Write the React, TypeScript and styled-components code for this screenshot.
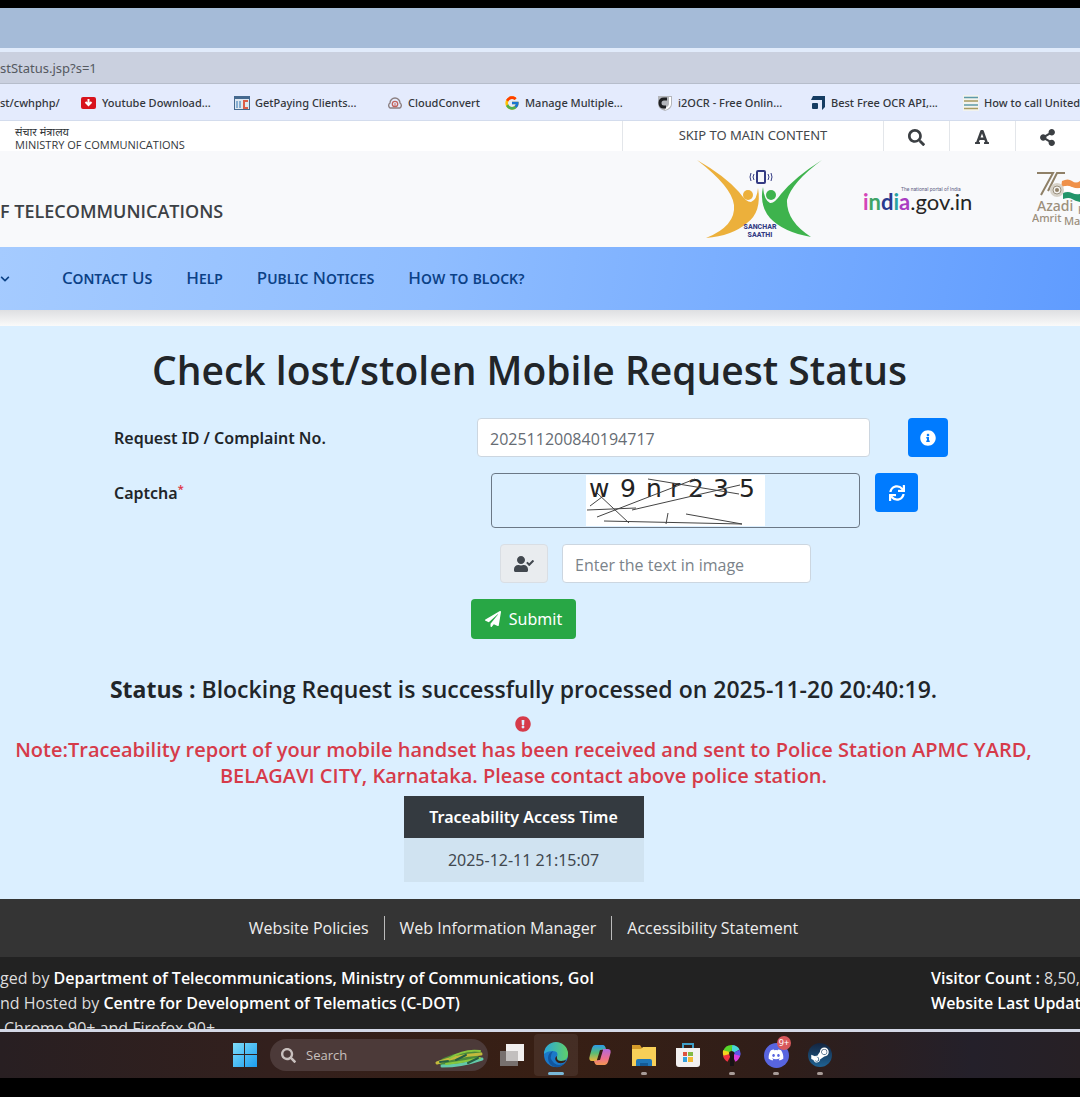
import React from "react";
import styled, { createGlobalStyle } from "styled-components";
import {
  FaSearch,
  FaFont,
  FaShareAlt,
  FaInfoCircle,
  FaSync,
  FaUserCheck,
  FaPaperPlane,
  FaExclamationCircle,
  FaChevronDown,
  FaDiscord,
  FaSteamSymbol,
} from "react-icons/fa";
import { FcGoogle } from "react-icons/fc";

const uiFont = `"Noto Sans", "Open Sans", sans-serif`;
const pageFont = `"Noto Sans", "Open Sans", sans-serif`;
const headingFont = `"Open Sans", "Noto Sans", sans-serif`;

const GlobalStyle = createGlobalStyle`
  *, *::before, *::after { box-sizing: border-box; }
  body { margin: 0; background: #000; overflow-x: hidden; }
  button, input { font: inherit; }
  h1, h2, p { margin: 0; }
`;

const Screen = styled.div`
  display: flex;
  flex-direction: column;
  padding: 8px 0 19px;
  background: #000;
  color: #212529;
  font-family: ${pageFont};
  overflow: hidden;
`;

/* Browser chrome */
const TabStrip = styled.div`
  height: 40px;
  background: #a5bbd8;
`;
const AddressBar = styled.div`
  height: 36px;
  display: flex;
  align-items: center;
  background: #cad0df;
  border-top: 4px solid #e1ebfb;
  border-bottom: 1px solid #b6bdcb;
  font: 13px/20px ${uiFont};
  color: #55595f;
`;
const Bookmarks = styled.nav`
  height: 37px;
  padding-top: 2px;
  display: flex;
  align-items: center;
  background: #e4ebfd;
  border-bottom: 1px solid #d3dced;
  font: 500 11px/20px ${uiFont};
`;
const Bookmark = styled.a<{ $width: number }>`
  flex: 0 0 ${(p) => p.$width}px;
  display: flex;
  align-items: center;
  gap: 5px;
  color: #33363b;
  text-decoration: none;
  white-space: nowrap;
  svg { flex: none; }
`;

/* Ministry header */
const TopBar = styled.div`
  height: 30px;
  display: flex;
  justify-content: space-between;
  background: #fff;
`;
const Ministry = styled.div`
  padding: 4px 0 0 15px;
  font: 11px/13px ${headingFont};
  color: #33373b;
  p { white-space: nowrap; }
`;
const TopTools = styled.div`
  display: flex;
`;
const ToolCell = styled.button<{ $width: number }>`
  width: ${(p) => p.$width}px;
  padding: 2px 1px 0 0;
  display: grid;
  place-items: center;
  border: 0;
  border-left: 1px solid #e3e6ea;
  background: none;
  color: #3b3f43;
`;
const SkipLink = styled.a`
  width: 261px;
  padding-top: 4px;
  border-left: 1px solid #e3e6ea;
  font: 13px/20px ${pageFont};
  color: #44484c;
  text-align: center;
  text-decoration: none;
`;
const Masthead = styled.header`
  height: 96px;
  display: flex;
  justify-content: space-between;
  align-items: center;
  background: #f8f9fb;
`;
const Department = styled.p`
  padding-top: 24px;
  font-family: ${headingFont};
  font-size: 18px;
  line-height: 24px;
  font-weight: 600;
  color: #3c4145;
  white-space: nowrap;
`;
const Logos = styled.div`
  display: flex;
  align-items: center;
  svg { display: block; }
`;
const IndiaLogo = styled.div`
  width: 209px;
  padding-left: 40px;
`;

/* Navigation */
const Nav = styled.nav`
  height: 63px;
  padding-bottom: 1px;
  display: flex;
  align-items: center;
  gap: 34px;
  background: linear-gradient(100deg, #a5cbff 0%, #8fbdff 40%, #609cff 100%);
  a {
    color: #0b4186;
    font: 500 17px/24px ${pageFont};
    font-variant: small-caps;
    text-decoration: none;
    white-space: nowrap;
  }
`;
const NavCaret = styled.button`
  width: 28px;
  padding: 0;
  border: 0;
  background: none;
  color: #0b4186;
  text-align: left;
`;
const NavShadow = styled.div`
  height: 16px;
  background: linear-gradient(#dedfe2, #fafafa);
`;

/* Status form */
const Main = styled.main`
  padding: 16px 33px 17px 0;
  display: flex;
  flex-direction: column;
  align-items: center;
  background: #dbefff;
`;
const Title = styled.h1`
  padding-left: 12px;
  font-family: ${headingFont};
  font-size: 39px;
  line-height: 56px;
  font-weight: 600;
  text-align: center;
`;
const Form = styled.form`
  width: 100%;
  padding: 20px 0 0 114px;
  display: flex;
  flex-direction: column;
  gap: 16px;
`;
const Row = styled.div`
  display: grid;
  grid-template-columns: 363px 1fr;
  align-items: start;
`;
const Label = styled.label`
  padding-top: 8px;
  font-size: 16px;
  line-height: 24px;
  font-weight: 600;
  sup { color: #e03444; font-size: 11px; line-height: 0; }
`;
const Field = styled.div<{ $inset: number; $gap: number }>`
  display: flex;
  align-items: flex-start;
  padding-left: ${(p) => p.$inset}px;
  gap: ${(p) => p.$gap}px;
`;
const TextInput = styled.input<{ $width: number }>`
  width: ${(p) => p.$width}px;
  height: 39px;
  padding: 2px 12px 0;
  border: 1px solid #ccd6e0;
  border-radius: 4px;
  background: #fff;
  color: #666c73;
  font-family: ${headingFont};
  font-size: 16px;
  &::placeholder { color: #7b838a; opacity: 1; }
`;
const BlueButton = styled.button<{ $width: number }>`
  width: ${(p) => p.$width}px;
  height: 39px;
  padding: 0;
  display: grid;
  place-items: center;
  border: 0;
  border-radius: 4px;
  background: #007bff;
  color: #fff;
`;
const Captcha = styled.div`
  width: 369px;
  height: 55px;
  display: flex;
  justify-content: center;
  align-items: center;
  border: 1px solid #6b7886;
  border-radius: 4px;
`;
const Addon = styled.span`
  width: 48px;
  height: 39px;
  display: grid;
  place-items: center;
  border: 1px solid #d9dee4;
  border-radius: 4px;
  background: #e9ecef;
  color: #42484f;
`;
const Submit = styled.button`
  margin-left: 357px;
  width: 105px;
  height: 40px;
  padding: 0;
  display: flex;
  align-items: center;
  justify-content: center;
  gap: 8px;
  border: 0;
  border-radius: 4px;
  background: #28a745;
  color: #fff;
  font-size: 16px;
`;
const Status = styled.h2`
  padding-top: 35px;
  font-family: ${headingFont};
  font-size: 23px;
  line-height: 30px;
  font-weight: 600;
  text-align: center;
  b { font-weight: 700; }
`;
const Alert = styled.div`
  display: flex;
  flex-direction: column;
  align-items: center;
  gap: 5px;
  padding: 12px 0 7px;
  color: #d63b4a;
  p {
    font-family: ${headingFont};
    font-size: 20px;
    line-height: 26px;
    font-weight: 600;
    text-align: center;
  }
`;
const TimeTable = styled.table`
  width: 240px;
  border-collapse: collapse;
  font-size: 16px;
  line-height: 24px;
  text-align: center;
  th {
    height: 42px;
    padding: 0;
    background: #343a40;
    color: #fff;
    font-weight: 600;
  }
  td {
    height: 44px;
    padding: 0;
    background: #d0e3f1;
    color: #41484f;
  }
`;

/* Footer */
const FooterLinks = styled.div`
  height: 58px;
  padding-right: 33px;
  display: flex;
  justify-content: center;
  align-items: center;
  background: #343434;
  a {
    padding: 0 15px;
    color: #eee;
    font-family: ${headingFont};
    font-size: 16px;
    line-height: 24px;
    text-decoration: none;
  }
  a + a { border-left: 1px solid #bbb; }
`;
const FooterInfo = styled.footer`
  height: 72px;
  padding-top: 9px;
  display: flex;
  justify-content: space-between;
  overflow: hidden;
  background: #222;
  color: #ddd;
  font-family: ${headingFont};
  font-size: 16px;
  line-height: 25px;
  white-space: nowrap;
  b { color: #fff; font-weight: 600; }
`;
const Browsers = styled.p`
  padding-left: 4px;
`;
const Visitors = styled.div`
  width: 149px;
`;

/* Taskbar */
const Taskbar = styled.div`
  height: 49px;
  padding: 0 15px 0 0;
  display: flex;
  align-items: center;
  justify-content: center;
  border-top: 3px solid #d4d8e6;
  background: linear-gradient(90deg, #281f22 0%, #33201d 25%, #381f14 50%, #301e19 72%, #24202a 90%, #272025 100%);
`;
const Slot = styled.button<{ $active?: boolean; $running?: boolean }>`
  position: relative;
  width: 44px;
  height: 42px;
  padding: 0;
  display: grid;
  place-items: center;
  border: 0;
  border-radius: 4px;
  background: ${(p) => (p.$active ? "#ffffff12" : "none")};
  svg { display: block; }
  &::after {
    content: "";
    position: absolute;
    bottom: 1px;
    left: calc(50% - ${(p) => (p.$active ? 8 : 3)}px);
    width: ${(p) => (p.$active ? 16 : 6)}px;
    height: 3px;
    border-radius: 2px;
    background: ${(p) => (p.$active ? "#79b8d8" : p.$running ? "#a89c98" : "transparent")};
  }
`;
const SearchBox = styled.label`
  width: 218px;
  height: 32px;
  margin: 0 2px 0 3px;
  padding: 0 2px 0 11px;
  display: flex;
  align-items: center;
  border-radius: 16px;
  background: #4c3a39;
  color: #c8c0be;
  overflow: hidden;
  svg { flex: none; }
  input {
    flex: 1;
    min-width: 0;
    padding: 0 0 0 10px;
    border: 0;
    background: none;
    color: #c8c0be;
    font: 13px/20px ${headingFont};
    &::placeholder { color: #c8c0be; opacity: 1; }
  }
`;
const Badge = styled.span`
  position: absolute;
  top: 2px;
  right: 7px;
  width: 14px;
  height: 14px;
  border-radius: 7px;
  background: #d8585c;
  color: #fff;
  font: 9px/14px ${uiFont};
  text-align: center;
`;

const DownloadIcon = () => (
  <svg width="16" height="16" viewBox="0 0 16 16">
    <rect x="0" y="2" width="15" height="12" rx="2" fill="#d8131d" />
    <path d="M7.5 4v5M4.5 7l3 3 3-3" stroke="#fff" strokeWidth="2" fill="none" />
  </svg>
);
const ClientsIcon = () => (
  <svg width="16" height="16" viewBox="0 0 16 16">
    <rect x="0.5" y="1.5" width="15" height="13" fill="#dfe7f0" stroke="#45698f" />
    <path d="M0 2h16v2H0z" fill="#45698f" />
    <path d="M3 6v7M6 6v7" stroke="#6a9cc8" strokeWidth="1.5" />
    <path d="M14 6h-4v7h4" stroke="#dc5c48" strokeWidth="2" fill="none" />
  </svg>
);
const CloudIcon = () => (
  <svg width="16" height="16" viewBox="0 0 16 16" fill="none">
    <path d="M3 13a3 3 0 0 1 0-5 5 5 0 0 1 10 0 3 3 0 0 1 0 5z" stroke="#8b7f81" strokeWidth="1.4" />
    <circle cx="8" cy="9" r="2.7" stroke="#c2635c" strokeWidth="1.3" />
    <path d="M8 11V8" stroke="#c2635c" />
  </svg>
);
const OcrIcon = () => (
  <svg width="16" height="16" viewBox="0 0 16 16">
    <path d="M1 1h14v8q0 5-7 7-7-2-7-7z" fill="#b4b6bb" />
    <path d="M13 2v7q0 3-5 5" stroke="#fff" strokeWidth="2" fill="none" />
    <path d="M10 4H7Q3 4 3 8t4 4h2" stroke="#1f2023" strokeWidth="3" fill="none" />
  </svg>
);
const ApiIcon = () => (
  <svg width="16" height="16" viewBox="0 0 16 16" fill="#153c62">
    <path d="M3 1h12v11l-3 3V5H1z" />
    <rect x="2" y="8" width="6" height="6" rx="1" />
  </svg>
);
const LinesIcon = () => (
  <svg width="16" height="16" viewBox="0 0 16 16">
    <rect width="16" height="16" fill="#f2f3ee" />
    <path d="M1 2.5h14M1 10h14" stroke="#5d9aa9" strokeWidth="1.5" />
    <path d="M1 6h14M1 13.5h14" stroke="#a89b61" strokeWidth="1.5" />
  </svg>
);

const SancharSaathi = () => (
  <svg width="126" height="82" viewBox="0 0 126 82">
    <path d="M0 2Q28 18 42 34Q49 44 54 44Q60 42 61 30Q65 54 50 65Q35 78 9 80Q39 68 37 47Q35 29 0 2z" fill="#ecb03b" />
    <path d="M125 2Q98 19 84 36Q77 46 73 45Q67 42 66 29Q62 47 73 60Q86 74 114 79Q89 63 90 42Q95 24 125 2z" fill="#3eb34d" />
    <circle cx="51" cy="37" r="5" fill="#ecb03b" />
    <circle cx="74" cy="37" r="5" fill="#3eb34d" />
    <rect x="60" y="13" width="8" height="12" rx="1" fill="none" stroke="#343b83" strokeWidth="2" />
    <path d="M57 16q-2 3 0 6M54 15q-2 4 0 8M71 16q2 3 0 6M74 15q2 4 0 8" fill="none" stroke="#343b83" />
    <g fill="#343b83" fontFamily="Roboto, sans-serif" fontWeight="800" fontSize="7" textAnchor="middle">
      <text x="63" y="71">SANCHAR</text>
      <text x="63" y="79">SAATHI</text>
    </g>
  </svg>
);
const IndiaGov = () => (
  <svg width="120" height="36" viewBox="0 0 120 36">
    <text x="38" y="10" fontFamily="Roboto, sans-serif" fontSize="5" fill="#626486">The national portal of India</text>
    <text x="0" y="29" fontFamily="Lato, sans-serif" fontSize="22" fontWeight="700">
      <tspan fill="#d445b8">i</tspan>
      <tspan fill="#3fa468">n</tspan>
      <tspan fill="#293a8e">d</tspan>
      <tspan fill="#27a3a0">i</tspan>
      <tspan fill="#a93cc2">a</tspan>
      <tspan fill="#252525" fontWeight="400">.gov.in</tspan>
    </text>
  </svg>
);
const Azadi = () => (
  <svg width="48" height="60" viewBox="0 0 48 60">
    <path d="M5 4h16L9 26M33 4h-8l-9 18" fill="none" stroke="#8f8067" strokeWidth="2" />
    <path d="M30 12q6-3 10 0t8 0v7q-5 2-9-1t-10 1z" fill="#ef914a" />
    <path d="M30 18q5-2 10 0t8 1v5q-5 2-9-1t-9 1z" fill="#fff" />
    <path d="M31 24q5-2 9 0t8 1v8q-5-1-8-3t-9 0z" fill="#22956a" />
    <circle cx="25" cy="21" r="7" fill="#d7d2c8" />
    <circle cx="25" cy="21" r="4" fill="#f4f2ee" stroke="#9a9180" />
    <circle cx="25" cy="21" r="2" fill="#8f8067" />
    <g fontFamily="Noto Sans, sans-serif" fill="#9c8f7c" fontWeight="500">
      <text x="5" y="42" fontSize="14">Azadi</text>
      <text x="46" y="45" fontSize="10">K</text>
      <text x="0" y="53" fontSize="11">Amrit</text>
      <text x="32" y="56" fontSize="11">Ma</text>
    </g>
  </svg>
);

const CaptchaImage = () => (
  <svg width="179" height="51" viewBox="0 0 179 51" role="img" aria-label="Captcha image">
    <rect width="179" height="51" fill="#fff" />
    <text x="3 34 60 84 102 127 153" y="22" fontFamily="DejaVu Sans, sans-serif" fontSize="25" fill="#222">
      w9nr235
    </text>
    <path
      d="M11 18L43 48M4 31L16 22M1 35L50 33M11 42L109 4M62 4L153 19M46 35L154 10M18 46L156 49M80 49L82 38M100 39L156 49"
      stroke="#444"
      fill="none"
    />
  </svg>
);

const WindowsIcon = () => (
  <svg width="24" height="24" viewBox="0 0 24 24">
    <defs>
      <linearGradient id="win" x1="0" y1="0" x2="1" y2="1">
        <stop offset="0" stopColor="#7fdcf8" />
        <stop offset="1" stopColor="#1b9df0" />
      </linearGradient>
    </defs>
    <path d="M0 0h11v11H0zM12 0h12v11H12zM0 12h11v12H0zM12 12h12v12H12z" fill="url(#win)" />
  </svg>
);
const SearchArt = () => (
  <svg width="52" height="30" viewBox="0 0 52 30" fill="none" strokeLinecap="round">
    <path d="M3 22Q20 10 48 12Q40 26 8 26z" fill="#4c8a3a" />
    <path d="M3 23Q20 16 47 14" stroke="#c3b93c" strokeWidth="3" />
    <path d="M8 26Q28 26 48 19" stroke="#63c8aa" strokeWidth="3" />
    <path d="M16 18Q30 9 46 11M12 24q18-2 34-6" stroke="#87c73f" strokeWidth="2" />
    <path d="M22 20l10-5M34 23l10-5M6 22l8-1" stroke="#265f43" strokeWidth="2" />
  </svg>
);
const TaskViewIcon = () => (
  <svg width="26" height="24" viewBox="0 0 26 24">
    <rect x="1" y="8" width="18" height="15" fill="#77706e" />
    <rect x="7" y="1" width="18" height="17" fill="#f1efee" />
    <rect x="7" y="8" width="12" height="10" fill="#c2bfbe" />
  </svg>
);
const EdgeIcon = () => (
  <svg width="26" height="26" viewBox="0 0 26 26">
    <defs>
      <linearGradient id="edgeTop" x1="0" y1="0" x2="1" y2="0">
        <stop offset="0" stopColor="#2aa6dc" />
        <stop offset="1" stopColor="#5fd06a" />
      </linearGradient>
    </defs>
    <circle cx="13" cy="13" r="12" fill="#1b78c8" />
    <path d="M1 12A12 12 0 0 1 25 12q0 7-7 7-5 0-4-4 2-6-4-6-6 0-9 3z" fill="url(#edgeTop)" />
    <path d="M10 9q-5 7 1 12 5 4 11 0-4 5-10 4Q5 23 5 16q0-5 5-7z" fill="#12569f" />
    <path d="M14 14q-1 5 4 5 3 0 5-1l-1 2q-6 3-9-1-2-3 1-5z" fill="#381f14" />
  </svg>
);
const CopilotIcon = () => (
  <svg width="24" height="24" viewBox="0 0 24 24">
    <defs>
      <linearGradient id="copL" x1="0" y1="0" x2="0" y2="1">
        <stop offset="0" stopColor="#2c9be8" />
        <stop offset="0.5" stopColor="#58bd75" />
        <stop offset="1" stopColor="#f1b43a" />
      </linearGradient>
      <linearGradient id="copR" x1="0" y1="0" x2="0" y2="1">
        <stop offset="0" stopColor="#b368dd" />
        <stop offset="0.6" stopColor="#ee6f8d" />
        <stop offset="1" stopColor="#f29850" />
      </linearGradient>
    </defs>
    <path d="M7 2h8q2 0 3 4l-5 1-4 11H4Q0 18 2 12L4 5q1-3 3-3z" fill="url(#copL)" />
    <path d="M17 22H9q-2 0-3-4l5-1 4-11h5q4 0 2 6l-2 7q-1 3-3 3z" fill="url(#copR)" />
    <path d="M12 7h3l-3 10H9z" fill="#381f14" />
  </svg>
);
const FolderIcon = () => (
  <svg width="26" height="24" viewBox="0 0 26 24">
    <path d="M1 2h8l2 3h14v6H1z" fill="#d59a29" />
    <path d="M1 6h9l2-2h13v19H1z" fill="#f7cf58" />
    <path d="M5 23v-5q0-2 2-2h12q2 0 2 2v5z" fill="#1e76b8" />
    <path d="M9 23v-3h8v3z" fill="#145a94" />
  </svg>
);
const StoreIcon = () => (
  <svg width="26" height="26" viewBox="0 0 26 26">
    <path d="M8 7V2h10v5" fill="none" stroke="#3f9fc8" strokeWidth="2" />
    <path d="M1 6h24v16q0 3-3 3H4q-3 0-3-3z" fill="#f3f1f1" />
    <path d="M8 10h4v4H8z" fill="#dd5340" />
    <path d="M13 10h5v4h-5z" fill="#83b943" />
    <path d="M8 15h4v5H8z" fill="#35a0dd" />
    <path d="M13 15h5v5h-5z" fill="#f3b936" />
  </svg>
);
const ColorWheelIcon = () => (
  <svg width="22" height="26" viewBox="0 0 22 26" fill="none" strokeWidth="6">
    <path d="M11 6a6 6 0 0 1 5 3" stroke="#48d7d7" />
    <path d="M5 10a6 6 0 0 1 6-4" stroke="#57d62b" />
    <path d="M6 14a6 6 0 0 1-1-5" stroke="#f3d51e" />
    <path d="M8 17a6 6 0 0 1-3-4" stroke="#ee3240" />
    <path d="M16 9a6 6 0 0 1 0 5" stroke="#5d56e8" />
    <path d="M16 13a6 6 0 0 1-3 4" stroke="#db3edc" />
    <path d="M11 12v12" stroke="#181315" strokeWidth="4" />
    <circle cx="11" cy="12" r="2" fill="#211614" stroke="none" />
  </svg>
);
const DiscordDisc = styled.span`
  width: 25px;
  height: 25px;
  display: grid;
  place-items: center;
  border-radius: 50%;
  background: #5865e0;
  color: #fff;
`;
const SteamDisc = styled(DiscordDisc)`
  width: 24px;
  height: 24px;
  background: linear-gradient(#14243f, #1f6394);
`;

const bookmarks = [
  { text: "Youtube Download...", icon: <DownloadIcon />, width: 153 },
  { text: "GetPaying Clients...", icon: <ClientsIcon />, width: 153 },
  { text: "CloudConvert", icon: <CloudIcon />, width: 117 },
  { text: "Manage Multiple...", icon: <FcGoogle size={16} />, width: 153 },
  { text: "i2OCR - Free Onlin...", icon: <OcrIcon />, width: 153 },
  { text: "Best Free OCR API,...", icon: <ApiIcon />, width: 153 },
  { text: "How to call United", icon: <LinesIcon />, width: 153 },
];

export default function App() {
  return (
    <Screen>
      <GlobalStyle />
      <TabStrip />
      <AddressBar>stStatus.jsp?s=1</AddressBar>
      <Bookmarks aria-label="Bookmarks">
        <Bookmark href="#" $width={81}>st/cwhphp/</Bookmark>
        {bookmarks.map((b) => (
          <Bookmark href="#" key={b.text} $width={b.width}>
            {b.icon}
            {b.text}
          </Bookmark>
        ))}
      </Bookmarks>

      <TopBar>
        <Ministry>
          <p lang="hi">संचार मंत्रालय</p>
          <p>MINISTRY OF COMMUNICATIONS</p>
        </Ministry>
        <TopTools>
          <SkipLink href="#content">SKIP TO MAIN CONTENT</SkipLink>
          <ToolCell $width={66} aria-label="Search"><FaSearch size={17} /></ToolCell>
          <ToolCell $width={66} aria-label="Text size"><FaFont size={16} /></ToolCell>
          <ToolCell $width={65} aria-label="Share"><FaShareAlt size={17} /></ToolCell>
        </TopTools>
      </TopBar>

      <Masthead>
        <Department>F TELECOMMUNICATIONS</Department>
        <Logos>
          <SancharSaathi />
          <IndiaLogo><IndiaGov /></IndiaLogo>
          <Azadi />
        </Logos>
      </Masthead>

      <Nav>
        <NavCaret aria-label="Open submenu"><FaChevronDown size={10} /></NavCaret>
        <a href="#">Contact Us</a>
        <a href="#">Help</a>
        <a href="#">Public Notices</a>
        <a href="#">How to block?</a>
      </Nav>
      <NavShadow />

      <Main id="content">
        <Title>Check lost/stolen Mobile Request Status</Title>
        <Form onSubmit={(e: React.FormEvent) => e.preventDefault()}>
          <Row>
            <Label htmlFor="request">Request ID / Complaint No.</Label>
            <Field $inset={0} $gap={38}>
              <TextInput id="request" $width={393} defaultValue="202511200840194717" />
              <BlueButton type="button" $width={40} aria-label="Information"><FaInfoCircle size={16} /></BlueButton>
            </Field>
          </Row>
          <Row>
            <Label htmlFor="captcha">Captcha<sup>*</sup></Label>
            <Field $inset={14} $gap={15}>
              <Captcha><CaptchaImage /></Captcha>
              <BlueButton type="button" $width={43} aria-label="Refresh captcha"><FaSync size={16} /></BlueButton>
            </Field>
          </Row>
          <Row>
            <span />
            <Field $inset={23} $gap={14}>
              <Addon><FaUserCheck size={20} /></Addon>
              <TextInput id="captcha" $width={249} placeholder="Enter the text in image" />
            </Field>
          </Row>
          <Submit type="submit"><FaPaperPlane size={16} />Submit</Submit>
        </Form>
        <Status><b>Status :</b> Blocking Request is successfully processed on 2025-11-20 20:40:19.</Status>
        <Alert role="alert">
          <FaExclamationCircle size={16} />
          <p>
            Note:Traceability report of your mobile handset has been received and sent to Police Station APMC YARD,
            <br />
            BELAGAVI CITY, Karnataka. Please contact above police station.
          </p>
        </Alert>
        <TimeTable>
          <thead><tr><th>Traceability Access Time</th></tr></thead>
          <tbody><tr><td>2025-12-11 21:15:07</td></tr></tbody>
        </TimeTable>
      </Main>

      <FooterLinks>
        <a href="#">Website Policies</a>
        <a href="#">Web Information Manager</a>
        <a href="#">Accessibility Statement</a>
      </FooterLinks>
      <FooterInfo>
        <div>
          <p>ged by <b>Department of Telecommunications, Ministry of Communications, GoI</b></p>
          <p>nd Hosted by <b>Centre for Development of Telematics (C-DOT)</b></p>
          <Browsers>Chrome 90+ and Firefox 90+</Browsers>
        </div>
        <Visitors>
          <p><b>Visitor Count :</b> 8,50,</p>
          <p><b>Website Last Updat</b></p>
        </Visitors>
      </FooterInfo>

      <Taskbar>
        <Slot aria-label="Start"><WindowsIcon /></Slot>
        <SearchBox>
          <FaSearch size={15} />
          <input aria-label="Search" placeholder="Search" />
          <SearchArt />
        </SearchBox>
        <Slot aria-label="Task view"><TaskViewIcon /></Slot>
        <Slot $active aria-label="Edge"><EdgeIcon /></Slot>
        <Slot aria-label="Copilot"><CopilotIcon /></Slot>
        <Slot $running aria-label="Files"><FolderIcon /></Slot>
        <Slot aria-label="Store"><StoreIcon /></Slot>
        <Slot $running aria-label="Colours"><ColorWheelIcon /></Slot>
        <Slot $running aria-label="Discord">
          <DiscordDisc><FaDiscord size={16} /></DiscordDisc>
          <Badge>9+</Badge>
        </Slot>
        <Slot $running aria-label="Steam"><SteamDisc><FaSteamSymbol size={20} /></SteamDisc></Slot>
      </Taskbar>
    </Screen>
  );
}
